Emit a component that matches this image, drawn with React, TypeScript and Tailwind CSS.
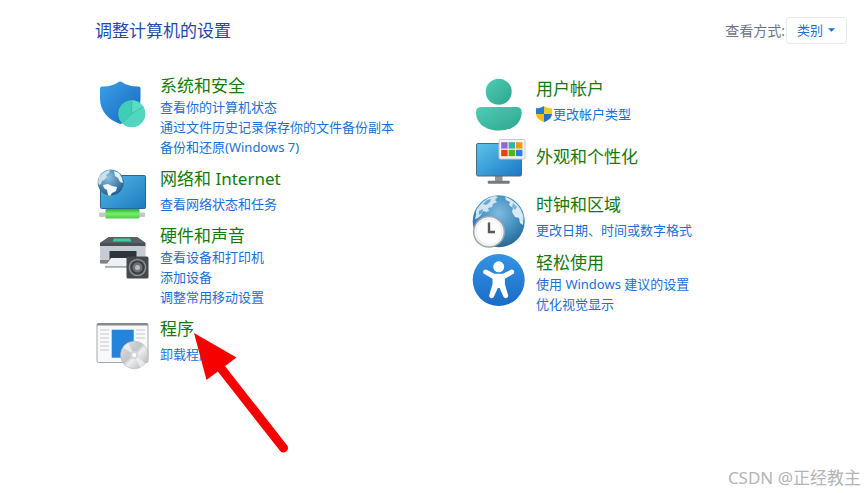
import React from "react";

const iconClass = "w-[55px] h-[46px] shrink-0 overflow-visible"

function SecurityIcon() {
  return (
    <svg viewBox="0 0 55 46" className={iconClass} aria-hidden="true">
      <defs>
        <linearGradient id="shield" x1="0" y1="0" x2="1" y2="1">
          <stop offset="0" stopColor="#3aa2ea" />
          <stop offset="1" stopColor="#1763ba" />
        </linearGradient>
      </defs>
      <path d="M23.500 7q1.700-1.200 3.400 0C31 10 37 11.800 43.500 11.500q2 0 2 2V24c0 12.500-9 21-20.200 25C14 45 5 36.500 5 24V13.500q0-2 2-2C13.500 11.800 19.500 10 23.500 7z" fill="url(#shield)" />
      <circle cx="36.700" cy="38.700" r="13.500" fill="#3fcdb6" />
      <path d="M36.700 38.700V25.200a13.500 13.500 0 0 1 11.700 6.700z" fill="#5bdac4" />
      <path d="M36.700 38.700l11.700-6.800a13.500 13.500 0 0 1-21.200 16.300z" fill="#52d6c0" />
      <path d="M36.700 25.200v13.500l11.700-6.800M36.700 38.700l-9.500 9.500" stroke="#34bda6" strokeWidth="0.800" fill="none" />
    </svg>
  );
}

function NetworkIcon() {
  return (
    <svg viewBox="0 0 55 46" className={iconClass} aria-hidden="true">
      <defs>
        <linearGradient id="netScreen" x1="0" y1="0" x2="1" y2="1">
          <stop offset="0" stopColor="#55b8e4" />
          <stop offset="1" stopColor="#1d7bc0" />
        </linearGradient>
        <linearGradient id="cable" x1="0" y1="0" x2="0" y2="1">
          <stop offset="0" stopColor="#2fae35" />
          <stop offset="0.500" stopColor="#74f070" />
          <stop offset="1" stopColor="#4fc94c" />
        </linearGradient>
        <radialGradient id="netGlobe" cx="0.400" cy="0.300" r="0.700">
          <stop offset="0" stopColor="#8cc0e0" />
          <stop offset="1" stopColor="#24608f" />
        </radialGradient>
      </defs>
      <rect x="5.500" y="7.500" width="45" height="33" rx="1" fill="url(#netScreen)" stroke="#2a6690" />
      <rect x="4" y="44.500" width="46" height="4.500" rx="1" fill="#c3c8cb" />
      <rect x="10.500" y="41" width="34" height="9.500" rx="1" fill="url(#cable)" />
      <circle cx="15.700" cy="14.500" r="13" fill="url(#netGlobe)" />
      <path d="M4 9c3-4 7-6.500 11-7l-1 3-3 2 1 2-3 3-2 1-1 3-2 1-1-3z" fill="#dcebf4" opacity="0.850" />
      <path d="M8 17l5-1 4 2 5 1-1 4-4 2-2 3-2-1-1-5-3-2z" fill="#f2f7fa" />
      <path d="M19 3l5 2 3 5 1 5-3-1-2-4-3-2z" fill="#e4eff6" />
    </svg>
  );
}

function PrinterIcon() {
  return (
    <svg viewBox="0 0 55 46" className={iconClass} aria-hidden="true">
      <path d="M14 12h28l8.500 6v4H5v-4z" fill="#4a4f56" />
      <path d="M14 12h28l8.500 6H5z" fill="#5b6067" />
      <path d="M19 13.500h16l1.500 3h-19z" fill="#35d19b" />
      <path d="M5 21h45.500v16.500q0 1-1 1H6q-1 0-1-1z" fill="#c6ccd4" />
      <path d="M5 35h45.500v2.500q0 1-1 1H6q-1 0-1-1z" fill="#7b8289" />
      <path d="M14.500 26h27v9h-27z" fill="#30343a" />
      <path d="M16 33h24l2 9H10z" fill="#eef1f4" />
      <path d="M10 41h32v1.800H10z" fill="#a5abb2" />
      <rect x="31.500" y="31.500" width="22" height="22" rx="1.500" fill="#45484c" />
      <circle cx="42.500" cy="42.500" r="8.800" fill="#8d9196" />
      <circle cx="42.500" cy="42.500" r="7.300" fill="#3d4044" />
      <circle cx="42.500" cy="42.500" r="5" fill="#6f7378" />
      <circle cx="42.500" cy="42.500" r="2.500" fill="#b9bdc1" />
    </svg>
  );
}

function ProgramsIcon() {
  return (
    <svg viewBox="0 0 55 46" className={iconClass} aria-hidden="true">
      <defs>
        <linearGradient id="disc" x1="0" y1="0" x2="1" y2="1">
          <stop offset="0" stopColor="#e4e6e8" />
          <stop offset="0.450" stopColor="#c2c5c8" />
          <stop offset="0.550" stopColor="#eceeef" />
          <stop offset="1" stopColor="#a9adb0" />
        </linearGradient>
      </defs>
      <rect x="2" y="5.500" width="51" height="39" rx="1.500" fill="#f8f9fa" stroke="#a4a8ad" />
      <path d="M2 7q0-2 1.500-2h48q1.500 0 1.500 2v.5H2z" fill="#85898e" />
      <rect x="16.700" y="11.700" width="22" height="28" fill="#2483da" />
      <path d="M5 12h9M5 16h9M5 20h9M5 24h9M5 28h9M5 32h9M41 12h9M41 16h9M41 20h9" stroke="#c3c7cb" strokeWidth="1.200" />
      <circle cx="39.300" cy="37" r="13.800" fill="url(#disc)" stroke="#b0b3b6" strokeWidth="0.600" />
      <path d="M39.300 37L28 29.300a13.800 13.800 0 0 1 5-4.500zM39.300 37l11 8a13.800 13.800 0 0 1-5 4.500z" fill="#fafafa" opacity="0.600" />
      <circle cx="39.300" cy="37" r="4" fill="#d5d8da" />
      <circle cx="39.300" cy="37" r="2" fill="#fff" />
    </svg>
  );
}

function UserIcon() {
  return (
    <svg viewBox="0 0 55 46" className={iconClass} aria-hidden="true">
      <defs>
        <linearGradient id="user" x1="0" y1="0" x2="1" y2="1">
          <stop offset="0" stopColor="#4fcdb4" />
          <stop offset="1" stopColor="#2fa58e" />
        </linearGradient>
      </defs>
      <circle cx="27.700" cy="13.700" r="13" fill="url(#user)" />
      <path d="M10.500 29h35q5.200 0 5.200 5.200C50.700 45 42 52.500 28 52.500S5 45 5 34.200Q5 29 10.500 29z" fill="url(#user)" />
    </svg>
  );
}

function AppearanceIcon() {
  return (
    <svg viewBox="0 0 55 46" className={iconClass} aria-hidden="true">
      <defs>
        <linearGradient id="screen" x1="0" y1="0" x2="1" y2="1">
          <stop offset="0" stopColor="#5cc3ea" />
          <stop offset="1" stopColor="#1a78c4" />
        </linearGradient>
      </defs>
      <path d="M24 40h7.500v5H24z" fill="#8f959b" />
      <rect x="16.700" y="44.700" width="22" height="3" rx="1" fill="#737a81" />
      <rect x="5.500" y="7.500" width="45" height="32.500" rx="1.500" fill="url(#screen)" stroke="#4f6a7c" />
      <rect x="28" y="3.500" width="26" height="19.500" rx="1.500" fill="#f4f4f4" stroke="#c4c8cb" />
      <rect x="30.200" y="6.200" width="6.400" height="6.400" fill="#9a63d2" />
      <rect x="37.600" y="6.200" width="6.400" height="6.400" fill="#2eb5a6" />
      <rect x="45" y="6.200" width="6.400" height="6.400" fill="#ec9a12" />
      <rect x="30.200" y="13.800" width="6.400" height="6.400" fill="#d9480f" />
      <rect x="37.600" y="13.800" width="6.400" height="6.400" fill="#5bb018" />
      <rect x="45" y="13.800" width="6.400" height="6.400" fill="#2c7be0" />
    </svg>
  );
}

function ClockIcon() {
  return (
    <svg viewBox="0 0 55 46" className={iconClass} aria-hidden="true">
      <defs>
        <radialGradient id="globe" cx="0.500" cy="0.350" r="0.700">
          <stop offset="0" stopColor="#7fbbe0" />
          <stop offset="0.600" stopColor="#3f8abb" />
          <stop offset="1" stopColor="#275f88" />
        </radialGradient>
      </defs>
      <circle cx="27.700" cy="27.300" r="26" fill="url(#globe)" />
      <path d="M5 17C9 9 16 3.500 24 2l3 1-3 3 2 2-4 2-1 3-4 1 1 3-3 1-3-1-2 4-3 3-3 1 1-4z" fill="#cfe4f1" />
      <path d="M16 6l4-1-1 3-4 3-3-1zM8 17l4-2-1 4-3 2z" fill="#6aa6cd" />
      <path d="M34 3c6 1.500 12 6 15.500 12l3 7-.5 9-3-2-1-5-4-1-3-5 1-4-4-3 1-3-4-2z" fill="#d9eaf4" />
      <path d="M42 9l4 4-2 3-3-3z" fill="#7db3d6" />
      <circle cx="18" cy="37.700" r="15.300" fill="#f6f7f8" stroke="#9ea5ab" strokeWidth="1.500" />
      <circle cx="18" cy="37.700" r="12.800" fill="#fff" stroke="#dfe2e4" strokeWidth="0.700" />
      <path d="M18 28.500V38h6" stroke="#55595e" strokeWidth="2.400" fill="none" />
    </svg>
  );
}

function AccessIcon() {
  return (
    <svg viewBox="0 0 55 46" className={iconClass} aria-hidden="true">
      <defs>
        <linearGradient id="access" x1="0" y1="0" x2="0" y2="1">
          <stop offset="0" stopColor="#3492e4" />
          <stop offset="1" stopColor="#1a6cc6" />
        </linearGradient>
      </defs>
      <circle cx="27.700" cy="28" r="26" fill="url(#access)" />
      <circle cx="27.700" cy="14.800" r="5.500" fill="#fff" />
      <path d="M15.500 17.700l8 4h8.400l8-4c2.900-1.100 4.700 2.800 2 4.400l-8 4.600v5.600l3.200 10.700c.8 3-3.400 4.500-4.700 1.600l-3.800-8.600h-1.800L23 44.600c-1.300 2.900-5.500 1.400-4.700-1.600l3.200-10.700v-5.600l-8-4.600c-2.700-1.600-.9-5.500 2-4.400z" fill="#fff" />
    </svg>
  );
}

function UacShield() {
  return (
    <svg viewBox="0 0 16 16" className="size-4 shrink-0" aria-hidden="true">
      <path d="M8 0C6 1.500 3 2.300 0 2.300V8h8z" fill="#2878d2" />
      <path d="M8 0c2 1.500 5 2.300 8 2.300V8H8z" fill="#fbc91b" />
      <path d="M0 8c.5 4 3.500 6.500 8 8V8z" fill="#f5bd12" />
      <path d="M16 8c-.5 4-3.500 6.500-8 8V8z" fill="#2470c4" />
    </svg>
  );
}

function Arrow() {
  return (
    <svg viewBox="0 0 100 130" className="absolute left-[97px] top-[13px] w-[100px] h-[130px] pointer-events-none" aria-hidden="true">
      <path d="M2 2l42.500 24.500L14.500 49z" fill="#f60000" />
      <path d="M28 36l63.500 81" stroke="#f60000" strokeWidth="9" strokeLinecap="round" />
    </svg>
  );
}

type CategoryProps = {
  icon: React.ReactNode
  title: string
  links?: string[]
  loose?: boolean
  shield?: boolean
  className?: string
  children?: React.ReactNode
}

function Category({ icon, title, links = [], loose, shield, className = "", children }: CategoryProps) {
  return (
    <section className={`relative flex items-start gap-[10px] ${className}`}>
      {icon}
      <div className={loose ? "flex flex-col gap-1" : "flex flex-col"}>
        <h2 className="text-[17px] leading-[22px] text-[#14790f]">
          <a href="#">{title}</a>
        </h2>
        {links.length > 0 && (
          <ul className="text-[13px] leading-5 text-[#1a6fd8]">
            {links.map((link) => (
              <li key={link} className="flex">
                <a href="#" className="flex items-center gap-px hover:underline">
                  {shield && <UacShield />}
                  {link}
                </a>
              </li>
            ))}
          </ul>
        )}
      </div>
      {children}
    </section>
  );
}

export default function App() {
  return (
    <div className="relative min-h-screen bg-white pl-[95px] pr-[18px] pt-[17px] font-['Noto_Sans','Noto_Sans_CJK_SC',sans-serif]">
      <header className="flex items-center justify-between">
        <h1 className="text-[17px] leading-[27px] text-[#2448a8]">调整计算机的设置</h1>
        <div className="flex items-center gap-px">
          <label htmlFor="view" className="text-[14px] text-[#6c7686]">查看方式:</label>
          <div className="relative">
            <select id="view" className="block appearance-none w-[61px] h-[27px] pl-[10px] text-[13px] text-[#1a6fd8] bg-white border border-[#e8eaed] rounded-[3px]">
              <option>类别</option>
            </select>
            <svg viewBox="0 0 8 4" className="absolute right-3 top-[11px] w-[7px] h-1 pointer-events-none" aria-hidden="true">
              <path d="M0 0h8L4 4z" fill="#1a6fd8" />
            </svg>
          </div>
        </div>
      </header>

      <main className="grid grid-cols-2 mt-[31px]">
        <div className="flex flex-col gap-[11px]">
          <Category icon={<SecurityIcon />} title="系统和安全" links={["查看你的计算机状态", "通过文件历史记录保存你的文件备份副本", "备份和还原(Windows 7)"]} />
          <Category icon={<NetworkIcon />} title="网络和 Internet" links={["查看网络状态和任务"]} loose />
          <Category icon={<PrinterIcon />} title="硬件和声音" links={["查看设备和打印机", "添加设备", "调整常用移动设置"]} />
          <Category icon={<ProgramsIcon />} title="程序" links={["卸载程序"]} loose>
            <Arrow />
          </Category>
        </div>
        <div className="flex flex-col gap-3 pt-[3px]">
          <Category icon={<UserIcon />} title="用户帐户" links={["更改帐户类型"]} loose shield />
          <Category icon={<AppearanceIcon />} title="外观和个性化" className="[&>div]:pt-[10px]" />
          <Category icon={<ClockIcon />} title="时钟和区域" links={["更改日期、时间或数字格式"]} loose />
          <Category icon={<AccessIcon />} title="轻松使用" links={["使用 Windows 建议的设置", "优化视觉显示"]} />
        </div>
      </main>

      <p className="absolute right-1 bottom-1 text-[17px] leading-[22px] text-[#b4b4b4]">CSDN @正经教主</p>
    </div>
  );
}
